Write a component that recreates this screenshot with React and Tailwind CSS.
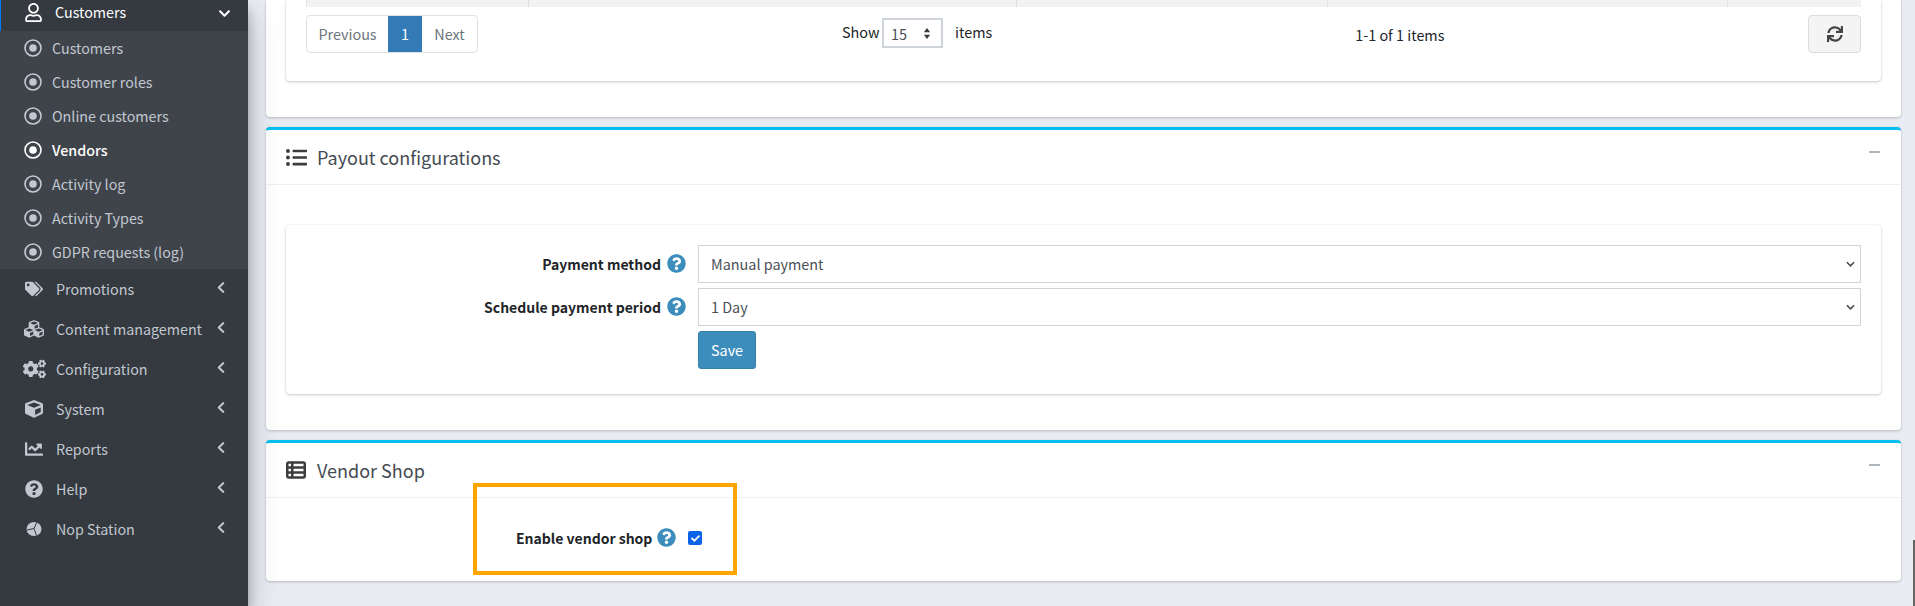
import { FaRegUser, FaChevronDown, FaChevronLeft, FaTags, FaCubes, FaCogs, FaCube, FaChartLine, FaQuestionCircle, FaListUl, FaSync, FaCheck } from 'react-icons/fa'
import { FaTableList } from 'react-icons/fa6'

const font = { fontFamily: '"Noto Sans CJK SC", "Source Sans Pro", sans-serif' }

const subItems = ['Customers', 'Customer roles', 'Online customers', 'Vendors', 'Activity log', 'Activity Types', 'GDPR requests (log)']

function NopIcon({ className }) {
  return (
    <svg viewBox="0 0 16 16" className={className}>
      <ellipse cx="8" cy="8" rx="7.5" ry="7" fill="currentColor" />
      <path d="M8 7.5 11 1M8 7.5 1 9M8 7.5 10.5 14.5" stroke="#343a40" strokeWidth="1" fill="none" />
    </svg>
  )
}

const navItems = [
  { label: 'Promotions', icon: FaTags, size: 'w-[18px] h-[18px]' },
  { label: 'Content management', icon: FaCubes, size: 'w-[20px] h-[20px]' },
  { label: 'Configuration', icon: FaCogs, size: 'w-[23px] h-[20px]' },
  { label: 'System', icon: FaCube, size: 'w-[18px] h-[18px]' },
  { label: 'Reports', icon: FaChartLine, size: 'w-[18px] h-[18px]' },
  { label: 'Help', icon: FaQuestionCircle, size: 'w-[18px] h-[18px]' },
  { label: 'Nop Station', icon: NopIcon, size: 'w-[16px] h-[16px]' },
]

function Sidebar() {
  return (
    <aside className="w-[248px] shrink-0 h-full bg-[#343a40] shadow-[0_14px_28px_rgba(0,0,0,0.25),0_10px_10px_rgba(0,0,0,0.22)] z-10 text-[14.3px]">
      <div className="h-[31px] flex items-center border-l border-[#007bff] bg-[#343a40] pl-[24px] pr-[17px] text-white">
        <FaRegUser className="w-[17px] h-[19px] mb-[6px]" />
        <span className="ml-[13px] flex-1 leading-[24px] mb-[7px]">Customers</span>
        <FaChevronDown className="w-[13px] h-[13px] mb-[4px]" />
      </div>
      <ul className="bg-[#3f444b]">
        {subItems.map((item) => (
          <li key={item} className={`h-[34px] flex items-center pl-[24px] ${item === 'Vendors' ? 'text-white font-medium' : 'text-[#c2c7d0]'}`}>
            <svg viewBox="0 0 18 18" className="w-[18px] h-[18px]">
              <circle cx="9" cy="9" r="8" fill="none" stroke="currentColor" strokeWidth="1.6" />
              <circle cx="9" cy="9" r="3.8" fill="currentColor" />
            </svg>
            <span className="ml-[10px] leading-[24px]">{item}</span>
          </li>
        ))}
      </ul>
      <ul>
        {navItems.map(({ label, icon: Icon, size }) => (
          <li key={label} className="h-[40px] flex items-center pl-[24px] pr-[23px] text-[#c2c7d0]">
            <span className="w-[20px] flex justify-center">
              <Icon className={`shrink-0 ${size}`} />
            </span>
            <span className="ml-[12px] flex-1 leading-[24px] whitespace-nowrap">{label}</span>
            <FaChevronLeft className="w-[8px] h-[13px] mb-[4px]" />
          </li>
        ))}
      </ul>
    </aside>
  )
}

function Help() {
  return <FaQuestionCircle className="w-[19px] h-[19px] text-[#3c8dbc] shrink-0 mb-[2px]" />
}

function CardHeader({ icon: Icon, title, iconClass }) {
  return (
    <div className="flex items-center h-[55px] border-b border-[#f0f0f2] pl-[20px] pr-[21px]">
      <span className="w-[20px] flex justify-center">
        <Icon className={`shrink-0 text-[#3d3d3d] ${iconClass}`} />
      </span>
      <h2 className="ml-[11px] flex-1 text-[18px] leading-[28px] font-normal text-[#444b52]">{title}</h2>
      <span className="w-[11px] h-[2px] bg-[#adb5bd] mb-[11px]" />
    </div>
  )
}

function SelectRow({ label, value }) {
  return (
    <div className="flex items-center gap-[12px]">
      <div className="w-[400px] flex items-center justify-end gap-[6px]">
        <label className="font-semibold text-[14px] text-[#212529] leading-[24px]">{label}</label>
        <Help />
      </div>
      <div className="flex-1 h-[38px] border border-[#ced4da] bg-white flex items-center justify-between pl-[12px] pr-[5px] text-[#495057]">
        <span className="leading-[24px]">{value}</span>
        <svg viewBox="0 0 10 7" className="w-[9px] h-[7px] text-[#4a4f55]" fill="none" stroke="currentColor" strokeWidth="1.8">
          <path d="M1 1l4 4 4-4" />
        </svg>
      </div>
    </div>
  )
}

export default function App() {
  return (
    <div className="h-[606px] w-full overflow-hidden flex bg-[#e9edf3] text-[14.4px] relative" style={font}>
      <Sidebar />
      <main className="flex-1 pl-[18px] pr-[14px] flex flex-col gap-[10px] min-w-0">
        <section className="h-[117px] bg-white rounded-b-[4px] shadow-[0_0_1px_rgba(0,0,0,0.125),0_1px_3px_rgba(0,0,0,0.2)] px-[20px]">
          <div className="h-[81px] bg-white rounded-b-[4px] shadow-[0_0_1px_rgba(0,0,0,0.125),0_1px_3px_rgba(0,0,0,0.2)] px-[20px]">
            <div className="h-[7px] bg-[#f2f2f2] grid grid-cols-[222px_488px_311px_400px_1fr] border-l border-[#e4e4e4]">
              <div className="border-r border-[#dddddd]" />
              <div className="border-r border-[#dddddd]" />
              <div className="border-r border-[#e4e4e4]" />
              <div className="border-r border-[#e4e4e4]" />
              <div />
            </div>
            <div className="relative flex items-start pt-[8px]">
              <nav className="flex h-[38px] w-[172px] border border-[#dee2e6] rounded-[4px] text-[#6c757d] leading-[24px]">
                <span className="w-[81px] flex items-center justify-center">Previous</span>
                <span className="w-[34px] bg-[#337ab7] text-white flex items-center justify-center">1</span>
                <span className="flex-1 flex items-center justify-center">Next</span>
              </nav>
              <div className="ml-[364px] flex items-start text-[#212529]">
                <span className="w-[40px] leading-[24px] mt-[5px]">Show</span>
                <span className="w-[61px] h-[30px] mt-[3px] border-2 border-[#ced4da] flex items-center pl-[7px] pr-[10px] justify-between text-[#495057]">
                  <span className="mt-[2px]">15</span>
                  <svg viewBox="0 0 8 14" className="w-[8px] h-[11px] text-[#343a40]" fill="currentColor">
                    <path d="M4 0 8 5.5H0zM4 14 0 8.5h8z" />
                  </svg>
                </span>
                <span className="ml-[12px] mt-[5px] leading-[24px]">items</span>
              </div>
              <span className="ml-[363px] mt-[8px] leading-[24px] text-[#212529]">1-1 of 1 items</span>
              <button className="ml-auto w-[53px] h-[38px] bg-[#f4f4f4] border border-[#dddddd] rounded-[4px] flex items-center justify-center">
                <FaSync className="w-[16px] h-[16px] text-[#444444]" />
              </button>
            </div>
          </div>
        </section>

        <section className="h-[303px] bg-white rounded-[4px] border-t-[3px] border-[#00c0ef] shadow-[0_0_1px_rgba(0,0,0,0.125),0_1px_3px_rgba(0,0,0,0.2)]">
          <CardHeader icon={FaListUl} title="Payout configurations" iconClass="w-[21px] h-[21px]" />
          <div className="px-[20px] pt-[40px]">
            <div className="h-[169px] rounded-[4px] bg-white shadow-[0_0_1px_rgba(0,0,0,0.125),0_1px_3px_rgba(0,0,0,0.2)] pt-[20px] pr-[20px] flex flex-col gap-[5px]">
              <SelectRow label="Payment method" value="Manual payment" />
              <SelectRow label="Schedule payment period" value="1 Day" />
              <div className="pl-[412px]">
                <button className="h-[38px] w-[58px] rounded-[3px] bg-[#3c8dbc] border border-[#367fa9] text-white">Save</button>
              </div>
            </div>
          </div>
        </section>

        <section className="h-[141px] bg-white rounded-[4px] border-t-[3px] border-[#00c0ef] shadow-[0_0_1px_rgba(0,0,0,0.125),0_1px_3px_rgba(0,0,0,0.2)]">
          <CardHeader icon={FaTableList} title="Vendor Shop" iconClass="w-[20px] h-[20px]" />
          <div className="pl-[250px] pt-[28px] flex items-center">
            <label className="font-semibold text-[14px] text-[#212529] leading-[24px]">Enable vendor shop</label>
            <span className="ml-[5px] flex"><Help /></span>
            <span className="ml-[12px] w-[14px] h-[14px] rounded-[2px] bg-[#0d63e8] flex items-center justify-center">
              <FaCheck className="w-[9px] h-[9px] text-white" />
            </span>
          </div>
        </section>
      </main>
      {/* annotation drawn on top of the screenshot */}
      <div className="absolute left-[473px] top-[483px] w-[264px] h-[92px] border-[4px] border-[#ffa500] pointer-events-none z-20" />
      <div className="absolute right-0 top-[540px] bottom-0 w-[2px] bg-[#666666]" />
    </div>
  )
}
